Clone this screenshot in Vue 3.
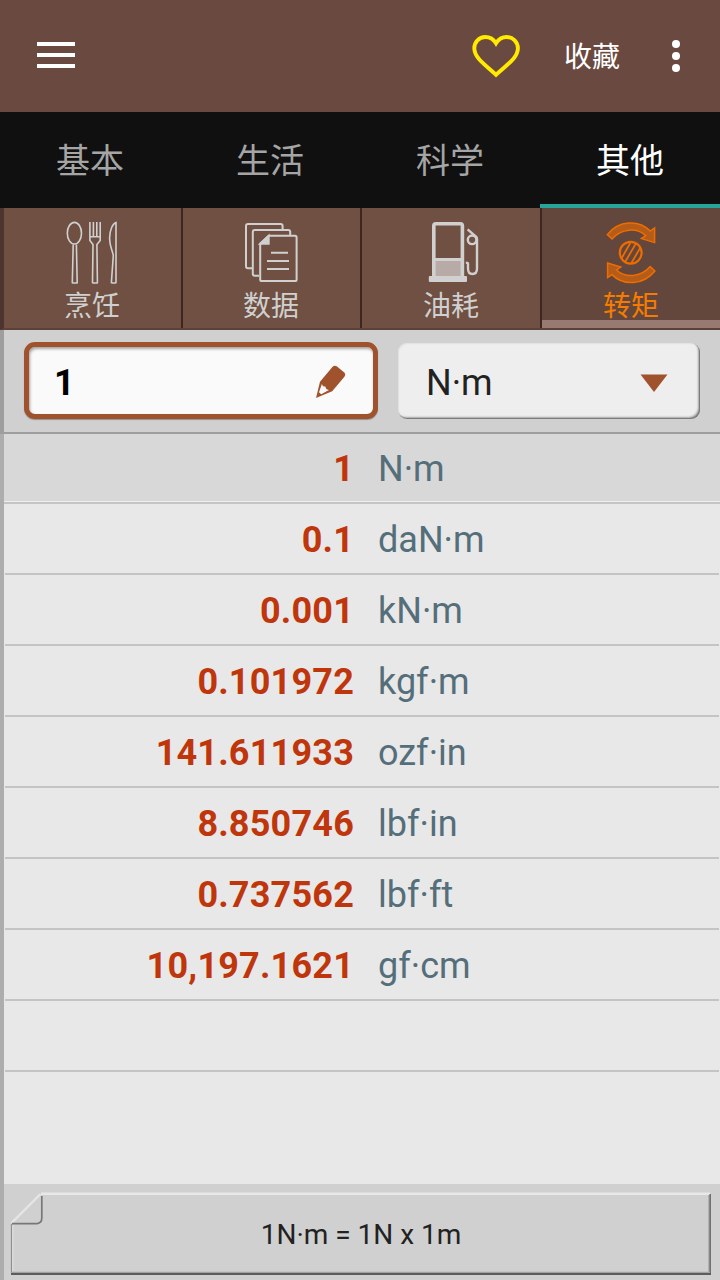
<template>
  <div class="app">
    <header class="toolbar">
      <button class="burger" aria-label="menu">
        <span /><span /><span />
      </button>
      <div class="actions">
        <svg class="heart" width="52" height="46" viewBox="0 0 52 46">
          <path d="M26 41.8C14 31 4.3 24.5 4.3 15.3C4.3 9 9 4 15.2 4C19.8 4 23.7 6.5 26 10.3C28.3 6.5 32.2 4 36.8 4C43 4 47.9 9 47.9 15.3C47.9 24.5 38 31 26 41.8Z" />
        </svg>
        <span class="fav">收藏</span>
        <svg class="dots" width="8" height="32" viewBox="0 0 8 32">
          <circle cx="4" cy="4" r="4" />
          <circle cx="4" cy="16" r="4" />
          <circle cx="4" cy="28" r="4" />
        </svg>
      </div>
    </header>

    <nav class="tabs">
      <div v-for="t in tabs" :key="t" class="tab" :class="{ active: t === activeTab }">{{ t }}</div>
    </nav>

    <nav class="cats">
      <div v-for="c in cats" :key="c.id" class="cat" :class="{ active: c.id === activeCat }">
        <svg v-if="c.id === 'cooking'" class="icon line" width="61" height="64" viewBox="0 0 61 64">
          <ellipse cx="12.4" cy="13.2" rx="7.1" ry="10.8" />
          <path d="M11.2 24.5L10.3 62.4Q10.3 63 11 63H14.6Q15.3 63 15.2 62.4L14.4 24.5" />
          <path d="M27.9 2V20.5L31 24.6L30.5 62.4Q30.5 63 31.2 63H34.8Q35.5 63 35.4 62.4L34.9 24.6L38.2 20.5V2M31.4 2V16.7M34.8 2V16.7M27.9 16.7H38.2" />
          <path d="M54 2.5V62.3Q54 63 53.3 63H50Q49.3 63 49.4 62.3L51.3 35.5C50.5 30 47.4 26 47.6 18C47.8 9 51 3.5 54 2.5Z" />
        </svg>

        <svg v-else-if="c.id === 'data'" class="icon docs" width="61" height="64" viewBox="0 0 61 64">
          <path d="M41.6 9V6Q41.6 4 39.6 4H7Q5 4 5 6V46.3Q5 48.3 7 48.3H11" />
          <path d="M49.2 15V12Q49.2 10 47.2 10H13.8Q11.8 10 11.8 12V53.7Q11.8 55.7 13.8 55.7H18" />
          <path d="M27.7 15.8H54Q55.6 15.8 55.6 17.4V59.4Q55.6 61 54 61H20.8Q19.2 61 19.2 59.4V23.8Z" />
          <path class="solid" d="M27.7 15.8V23.8H19.2Z" />
          <path d="M30 32.7H47M26 41H48M26 49H48" />
        </svg>

        <svg v-else-if="c.id === 'fuel'" class="icon" width="60" height="64" viewBox="0 0 60 64">
          <rect x="14" y="40" width="26" height="17" fill="#b8aba7" />
          <rect x="12.8" y="3.8" width="28.6" height="54" rx="2" fill="none" stroke="#d0d0d0" stroke-width="3.6" />
          <path d="M12 39.5H42" stroke="#d0d0d0" stroke-width="3" />
          <rect x="7.8" y="56" width="38.2" height="6" rx="1" fill="#d0d0d0" />
          <g class="hose">
            <circle cx="51.1" cy="19.8" r="4.3" />
            <path d="M46.6 9.3L55.2 16.8Q56 17.8 56 19.5V48.5C56 52 54 54 51.4 54C48.8 54 47 52 47 48.5V43.5Q47 42.6 44.8 42.6" />
          </g>
        </svg>

        <svg v-else class="icon torque" width="60" height="64" viewBox="0 0 60 64">
          <path class="arrow" d="M6.3 14.6C17.5 0.5 37.5 -0.8 49.3 11L53.6 8V22.6L40.4 18.6L44.7 15.6C36 7.5 20.5 8 11 19Z" />
          <path class="arrow" transform="rotate(180 30.1 32.8)" d="M6.3 14.6C17.5 0.5 37.5 -0.8 49.3 11L53.6 8V22.6L40.4 18.6L44.7 15.6C36 7.5 20.5 8 11 19Z" />
          <circle cx="29.7" cy="32.7" r="10.9" />
          <path class="hatch" d="M20.6 38.2L29.3 23M24.2 41.8L35 23.4M30.4 43L39.4 27.6" />
        </svg>
        <span class="cat-name">{{ c.name }}</span>
      </div>
    </nav>

    <section class="entry">
      <div class="amount">
        <span>{{ amount }}</span>
        <svg width="32" height="34" viewBox="0 0 32 34">
          <path fill="#a0522d" d="M1 33L5 16.8L17.4 2Q19.6 -0.2 22 1.5L29 7.3Q31.2 9.3 29.4 11.7L17.2 26.2Z" />
          <path fill="#fafafa" d="M6.9 19L4 27.3L6.2 29.2L14 25.1L11.5 24.3L10.2 21.6L8 21.2Z" />
        </svg>
      </div>
      <div class="unit">
        <span>{{ unit }}</span>
        <svg width="28" height="18" viewBox="0 0 28 18"><path d="M0.5 0.5H27.5L14 18Z" fill="#a0522d" /></svg>
      </div>
    </section>

    <ul class="results">
      <li v-for="(r, i) in rows" :key="i" :class="{ current: r.unit === unit }">
        <span class="value">{{ r.value }}</span>
        <span class="name">{{ r.unit }}</span>
      </li>
    </ul>

    <footer class="footer">
      <div class="note">
        <svg class="paper" width="702" height="86" viewBox="0 0 702 86">
          <path d="M31 2.8H700" stroke="#e8e8e8" stroke-width="2.4" />
          <path d="M1.5 32L30.5 3" stroke="#e6e6e6" stroke-width="2.4" />
          <path d="M1.5 33V82" stroke="#8f8f8f" stroke-width="1.2" />
          <path d="M2.8 34V80" stroke="#dedede" stroke-width="1.2" />
          <path d="M699 4V82" stroke="#b0b0b0" stroke-width="2" />
          <path d="M700.2 3V83" stroke="#707070" stroke-width="1.6" />
          <path d="M1 81.5H700" stroke="#a2a2a2" stroke-width="1.4" />
          <path d="M1 83H701" stroke="#5c5c5c" stroke-width="2" />
          <path d="M2 32.6H27Q31.8 32 31.8 27V5" stroke="#777" stroke-width="1.7" />
        </svg>
        <span>1N·m = 1N x 1m</span>
      </div>
    </footer>
  </div>
</template>

<script setup>
import { ref } from 'vue'

const tabs = ['基本', '生活', '科学', '其他']
const activeTab = ref('其他')

const cats = [
  { id: 'cooking', name: '烹饪' },
  { id: 'data', name: '数据' },
  { id: 'fuel', name: '油耗' },
  { id: 'torque', name: '转矩' },
]
const activeCat = ref('torque')

const amount = ref('1')
const unit = ref('N·m')

// the last entry is an empty row that keeps the ruled lines going
const rows = [
  { value: '1', unit: 'N·m' },
  { value: '0.1', unit: 'daN·m' },
  { value: '0.001', unit: 'kN·m' },
  { value: '0.101972', unit: 'kgf·m' },
  { value: '141.611933', unit: 'ozf·in' },
  { value: '8.850746', unit: 'lbf·in' },
  { value: '0.737562', unit: 'lbf·ft' },
  { value: '10,197.1621', unit: 'gf·cm' },
  { value: '', unit: '' },
]
</script>

<style>
body { margin: 0; }
</style>

<style scoped>
.app {
  width: 720px;
  height: 1280px;
  display: flex;
  flex-direction: column;
  overflow: hidden;
  background: #e8e8e8;
  font-family: Roboto, 'Noto Sans CJK SC', sans-serif;
}

.toolbar {
  height: 112px;
  box-sizing: border-box;
  padding: 0 40px 0 37px;
  display: flex;
  align-items: center;
  justify-content: space-between;
  background: #6a4a40;
}
.burger {
  display: flex;
  flex-direction: column;
  gap: 7px;
  padding: 0;
  margin-bottom: 2px;
  border: 0;
  background: none;
}
.burger span { width: 38px; height: 4px; background: #fff; }
.actions { display: flex; align-items: center; }
.heart { fill: none; stroke: #ffea00; stroke-width: 3.9; }
.fav { margin: 0 52px 0 42px; padding-top: 4px; font-size: 28px; line-height: 40px; color: #fff; }
.dots { fill: #fff; }

.tabs { height: 96px; display: flex; background: #101010; }
.tab {
  flex: 1;
  box-sizing: border-box;
  border-bottom: 4px solid transparent;
  text-align: center;
  font-size: 34px;
  line-height: 98px;
  color: #a5a5a5;
}
.tab.active { color: #fff; border-color: #26a69a; }

.cats {
  height: 122px;
  box-sizing: border-box;
  display: grid;
  grid-template-columns: 179px 179px 180px 178px;
  grid-template-rows: 120px;
  border-left: 4px solid #4e342e;
  border-bottom: 2px solid #5d4037;
  background: #6f5042;
}
.cat {
  box-sizing: border-box;
  display: flex;
  flex-direction: column;
  align-items: center;
  padding-top: 12px;
  border-right: 2px solid #3e2723;
  color: #d0d0d0;
}
.cat.active {
  border-right: 0;
  background: #63473c;
  box-shadow: inset 0 -8px #977b70;
  color: #f57c00;
}
.cat-name { font-size: 28px; line-height: 46px; }
.cat:nth-child(-n + 2) .cat-name { padding-right: 1px; }
.icon { display: block; flex: none; }
.line { fill: none; stroke: #d0d0d0; stroke-width: 1.6; }
.docs { fill: none; stroke: #d0d0d0; stroke-width: 2; }
.docs .solid { fill: #d0d0d0; }
.hose { fill: none; stroke: #d0d0d0; stroke-width: 2.4; }
.torque { fill: none; stroke: #ef6c00; stroke-width: 2.2; }
.torque .arrow { fill: #b55d18; stroke-width: 1.5; }
.torque .hatch { stroke-width: 1.8; }

.entry {
  height: 104px;
  box-sizing: border-box;
  display: flex;
  align-items: flex-start;
  gap: 20px;
  padding: 12px 20px 0;
  border-left: 4px solid #9e9e9e;
  border-bottom: 2px solid #9e9e9e;
  background: #d0d0d0;
}
.amount,
.unit {
  box-sizing: border-box;
  flex: none;
  display: flex;
  align-items: center;
  justify-content: space-between;
  font-size: 36px;
}
.amount {
  width: 354px;
  height: 77px;
  padding: 3px 26px 0 25px;
  border: 5px solid #a0522d;
  border-radius: 11px;
  background: #fafafa;
  box-shadow: inset 1px 2px 3px rgba(0, 0, 0, 0.35), 0 1px 1px rgba(0, 0, 0, 0.3);
  font-weight: 700;
  color: #000;
}
.amount span { padding-top: 2px; }
.unit {
  width: 302px;
  height: 76px;
  margin-top: 1px;
  padding: 3px 32px 0 28px;
  border-radius: 9px;
  background: #eee;
  box-shadow: inset -1px -1px 1px #777, inset -2px -2px 2px #aaa, inset 1px 1px 1px #e2e2e2;
  color: #222;
}

.results {
  flex: 1;
  margin: 0;
  padding: 0;
  list-style: none;
  border-left: 4px solid #adadad;
}
.results li {
  box-sizing: border-box;
  height: 71px;
  display: grid;
  grid-template-columns: 349px 1fr;
  column-gap: 24px;
  margin: 0 1px;
  border-bottom: 2px solid #c4c4c4;
  font-size: 36px;
  line-height: 73px;
}
.results li:first-child { height: 70px; line-height: 71px; }
.results li.current {
  margin: 0;
  padding-left: 1px;
  background: #d8d8d8;
  box-shadow: inset 0 -1px #eee;
}
.value { text-align: right; font-weight: 700; letter-spacing: 0.2px; color: #bf360c; }
.name { color: #546e7a; }

.footer {
  height: 96px;
  box-sizing: border-box;
  padding: 7px 8px 3px 6px;
  border-left: 4px solid #adadad;
  background: #d0d0d0;
}
.note {
  position: relative;
  height: 86px;
  display: flex;
  align-items: center;
  justify-content: center;
  font-size: 28px;
  color: #222;
}
.paper { position: absolute; left: 0; top: 0; fill: none; }
.note span { position: relative; }
</style>
